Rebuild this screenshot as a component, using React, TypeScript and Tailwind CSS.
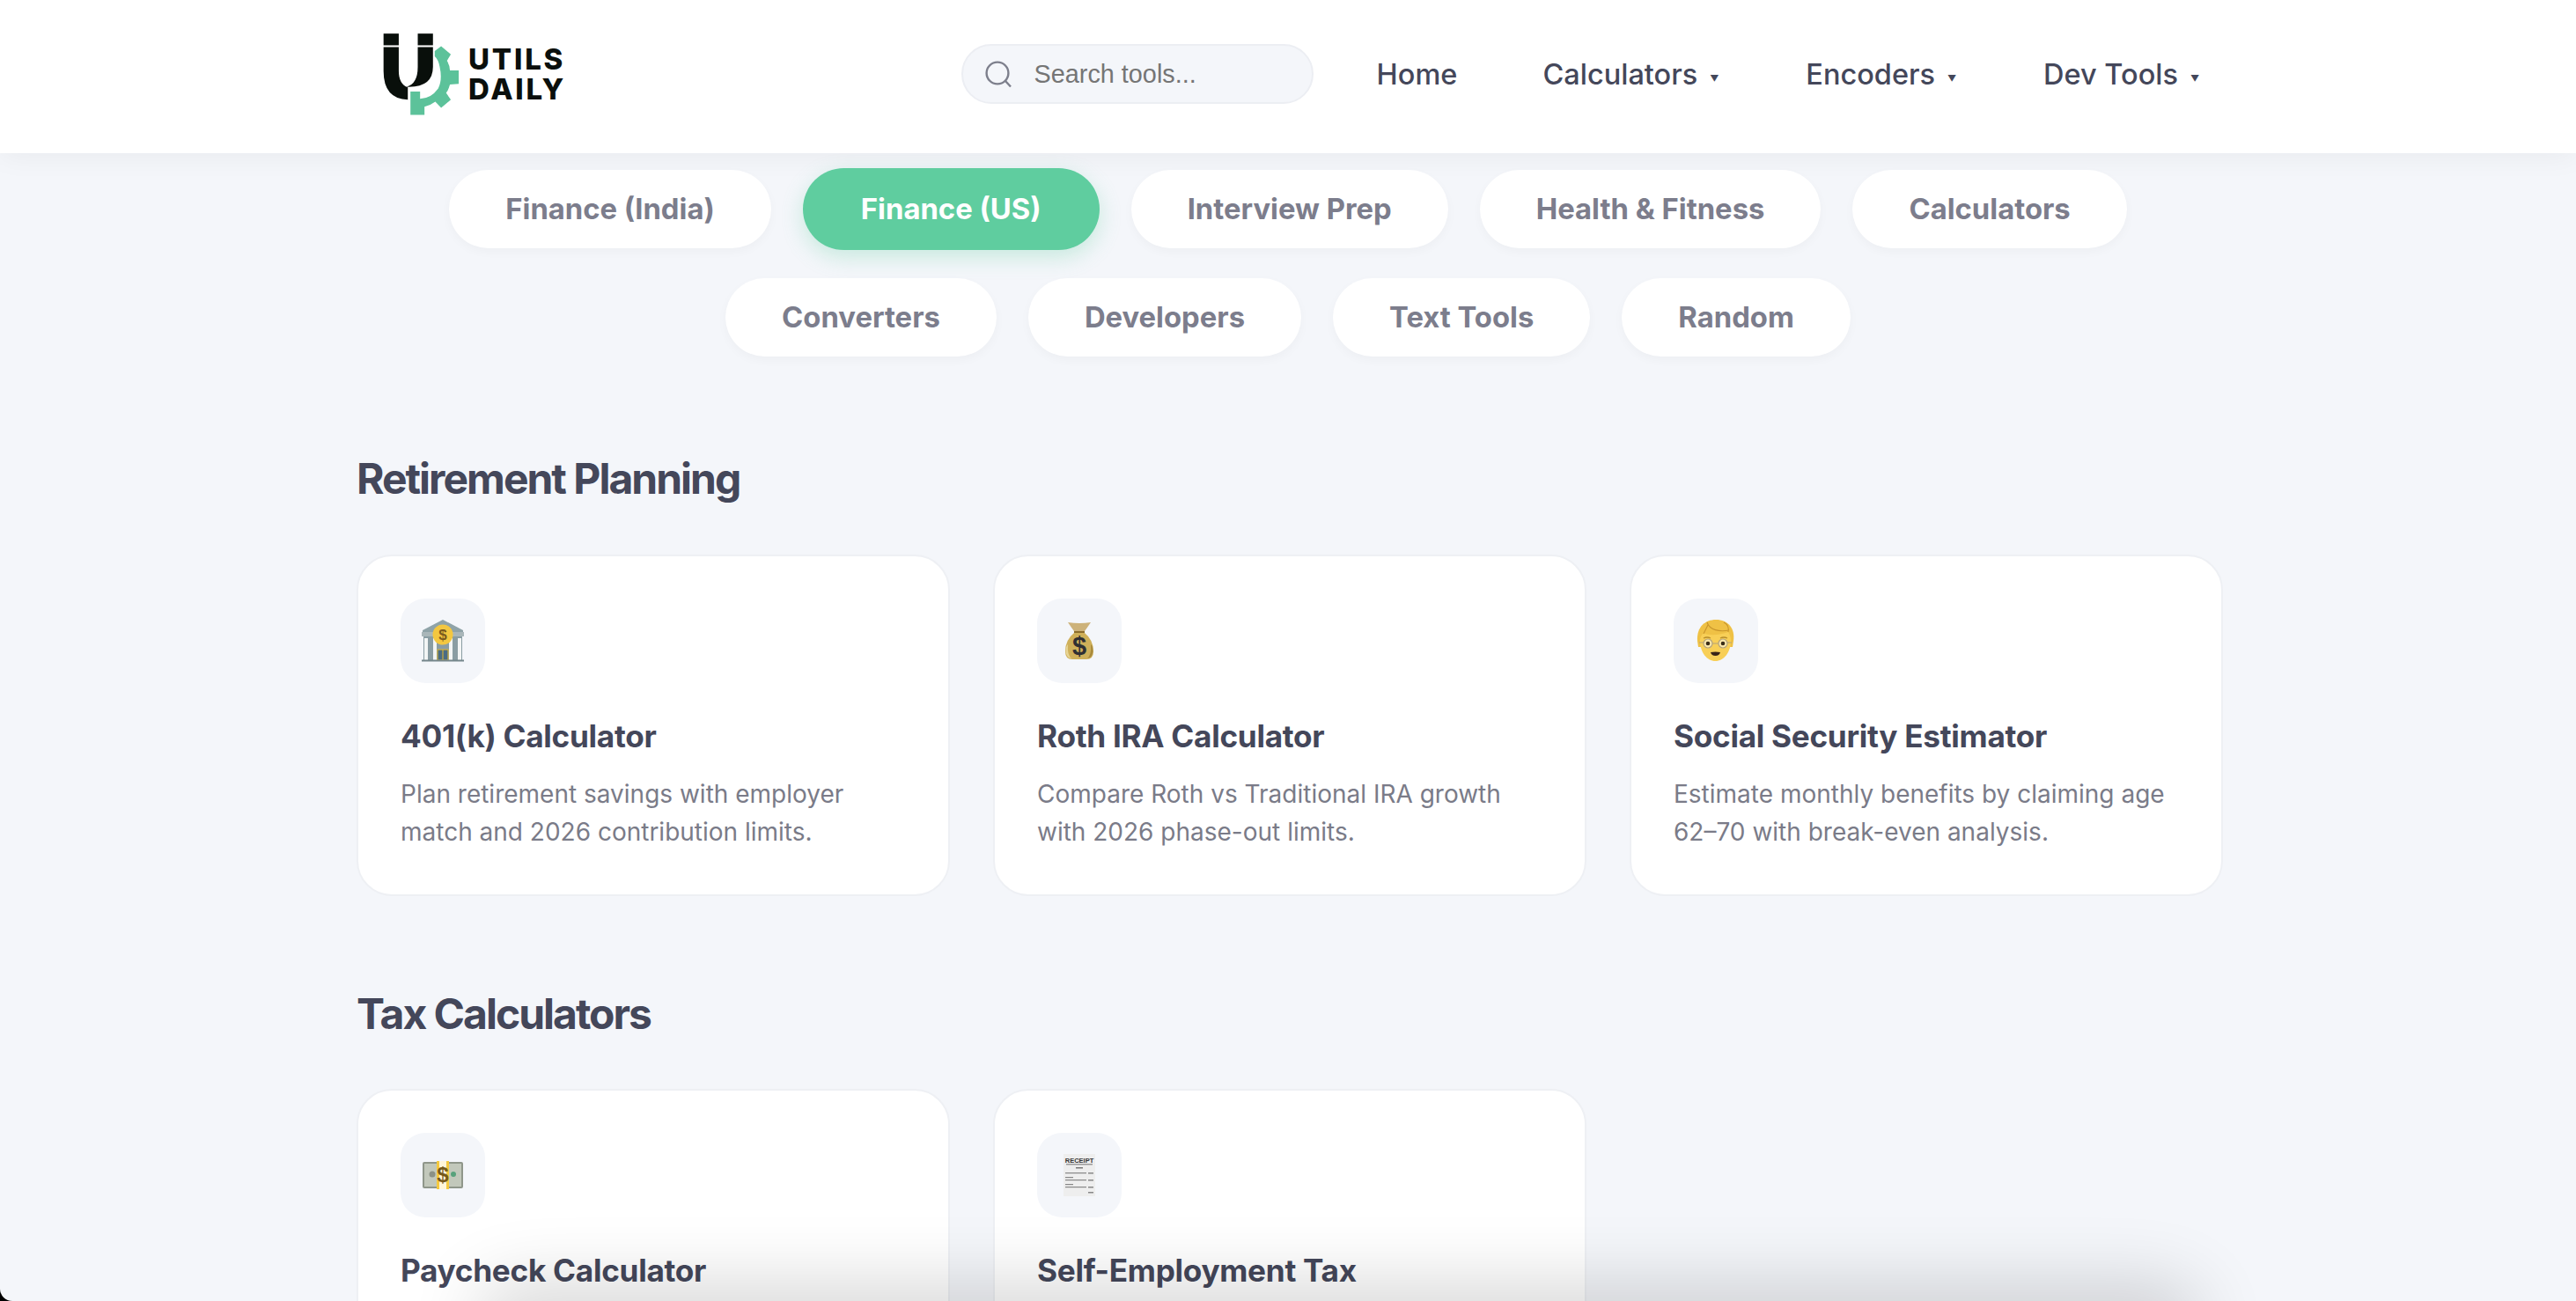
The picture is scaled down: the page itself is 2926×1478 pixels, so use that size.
import React from "react";

const Logo = () => (
  <svg width="93" height="100" viewBox="100 100 280 300" className="shrink-0">
    <g fill="#090f0b">
      <rect x="108" y="112" width="52" height="40" />
      <rect x="225" y="112" width="52" height="40" />
      <path d="M108 158H160V240Q160 284 191 296V338Q108 335 108 240Z" />
      <path d="M225 158H277V226Q277 298 186 294Q225 285 225 226Z" />
    </g>
    <path
      fill="#5cc29a"
      d="M305 155L338 183L325 205Q335 222 335 238H365V284L335 286Q330 305 322 315L338 338L305 366L285 345Q268 358 248 362V390H200V310H233V335Q270 335 295 300Q310 270 300 225Q295 200 283 190V172Z"
    />
  </svg>
);

const SearchIcon = () => (
  <svg width="31" height="31" viewBox="0 0 31 31" fill="none" stroke="#7d7f8c" strokeWidth="2.4" className="shrink-0">
    <circle cx="14" cy="14" r="12.4" />
    <path d="M23 23L29 29.5" />
  </svg>
);

const Bank = () => (
  <svg width="48" height="48" viewBox="0 0 48 48">
    <path d="M1 12L24 0L47 12V14H1Z" fill="#8fa3a8" />
    <rect x="0" y="14" width="48" height="5" fill="#a9b6b9" />
    <rect x="2" y="19" width="44" height="27" fill="#8a9da3" />
    <g fill="#f3f5f5">
      <rect x="3" y="21" width="4" height="25" />
      <rect x="13" y="21" width="4" height="25" />
      <rect x="31" y="21" width="4" height="25" />
      <rect x="41" y="21" width="4" height="25" />
    </g>
    <rect x="18" y="34" width="12" height="12" fill="#4a6c84" stroke="#e4b92f" strokeWidth="1" />
    <path d="M24 34V46" stroke="#e4b92f" />
    <rect x="0" y="45.500" width="48" height="2" fill="#75868b" />
    <circle cx="24" cy="17" r="11.500" fill="#f3c740" />
    <text x="24" y="23" textAnchor="middle" fontSize="17" fontWeight="700" fill="#7a5a1d" fontFamily="Liberation Sans, sans-serif">$</text>
  </svg>
);

const MoneyBag = () => (
  <svg width="34" height="44" viewBox="0 0 34 44">
    <path d="M4 1Q17 3 30 1Q26 7 23 11H11Q8 7 4 1Z" fill="#cdb27a" />
    <path d="M11 11H23V14H11Z" fill="#8b6d2e" />
    <path d="M11 13H23Q33 21 33 34Q33 43 25 43H9Q1 43 1 34Q1 21 11 13Z" fill="#cfb05a" />
    <path d="M4 26Q3 38 8 42Q2 41 1.500 34Q1.500 28 4 26Z" fill="#e8d595" />
    <path d="M30 26Q31 38 26 42Q32 41 32.500 34Q32.500 28 30 26Z" fill="#a98a3c" />
    <text x="17" y="38" textAnchor="middle" fontSize="29" fontWeight="700" fill="#2f2f33" fontFamily="Liberation Sans, sans-serif">$</text>
  </svg>
);

const Older = () => (
  <svg width="44" height="48" viewBox="0 0 44 48">
    <path d="M1 24C0 8 10 0 22 0C36 0 44 10 42 24L41 31H2Z" fill="#efc145" />
    <path d="M4 24C4 37 12 47 21.500 47C31 47 39 37 39 24C39 20 38 17 36 14C28 17 15 19 8 15C5 18 4 21 4 24Z" fill="#f8cf57" />
    <path d="M12 3C15 12 26 14 37 12M13 6L8 16M36 14C37 9 35 5 31 3" stroke="#c8952c" strokeWidth="1.100" fill="none" />
    <path d="M8 21Q12 19 16 21M27 21Q31 19 35 21" stroke="#b88e2c" strokeWidth="1.300" fill="none" />
    <circle cx="13" cy="27" r="5" fill="#fce9ad" stroke="#b3a37c" strokeWidth="1.200" />
    <circle cx="30" cy="27" r="5" fill="#fce9ad" stroke="#b3a37c" strokeWidth="1.200" />
    <path d="M18 27H25M3 26H8M35 26H40" stroke="#b3a37c" strokeWidth="1.200" />
    <circle cx="13" cy="27" r="2.300" fill="#3a2c18" />
    <circle cx="30" cy="27" r="2.300" fill="#3a2c18" />
    <path d="M16 37Q21.500 36 27 37Q26 41 21.500 41Q17 41 16 37Z" fill="#3a2417" />
  </svg>
);

const Banknote = () => (
  <svg width="46" height="32" viewBox="0 0 46 32">
    <rect x="0" y="1" width="46" height="30" rx="2" fill="#8f968a" />
    <rect x="2" y="3" width="42" height="26" fill="#c2c8bb" />
    <circle cx="11" cy="15" r="3.500" fill="#8b9186" />
    <circle cx="35" cy="15" r="3" fill="#58a27c" />
    <rect x="16" y="0" width="14" height="32" fill="#fff6d8" />
    <rect x="16" y="0" width="3" height="32" fill="#f4c93f" />
    <rect x="27" y="0" width="3" height="32" fill="#f4c93f" />
    <text x="23" y="24" textAnchor="middle" fontSize="24" fontWeight="700" fill="#75591a" fontFamily="Liberation Sans, sans-serif">$</text>
  </svg>
);

const Receipt = () => (
  <svg width="36" height="48" viewBox="0 0 36 48">
    <rect x="0" y="0" width="36" height="48" fill="#eeeeee" />
    <text x="18" y="10" textAnchor="middle" fontSize="7.500" fontWeight="700" fill="#333" fontFamily="Liberation Sans, sans-serif">RECEIPT</text>
    <rect x="3" y="11" width="30" height="1.500" fill="#9a9a9a" />
    <rect x="14" y="15" width="8" height="1.500" fill="#777" />
    <g fill="#888">
      <rect x="2" y="21" width="24" height="1.200" />
      <rect x="28" y="21" width="6" height="1.500" />
      <rect x="2" y="26" width="9" height="1.200" />
      <rect x="2" y="29" width="24" height="1.200" />
      <rect x="28" y="29" width="6" height="1.500" />
      <rect x="2" y="34" width="9" height="1.200" />
      <rect x="2" y="37" width="24" height="1.200" />
      <rect x="28" y="37" width="6" height="1.500" />
      <rect x="28" y="43" width="6" height="1.500" />
    </g>
  </svg>
);

const pills = ["Finance (India)", "Finance (US)", "Interview Prep", "Health & Fitness", "Calculators", "Converters", "Developers", "Text Tools", "Random"];

const Card = ({ icon, title, desc }: { icon: React.ReactNode; title: string; desc: string }) => (
  <div className="h-[388px] rounded-[40px] border-2 border-[#eef0f4] bg-white px-[48px] pt-[48px]">
    <div className="flex h-[96px] w-[96px] items-center justify-center rounded-[28px] bg-[#f4f6fa]">{icon}</div>
    <h3 className="mt-[36px] text-[35.2px] leading-[48px] font-bold tracking-[-0.3px] text-[#44475a]">{title}</h3>
    <p className="mt-[21px] text-[28px] leading-[43px] text-[#7a7b88]">{desc}</p>
  </div>
);

const Nav = ({ label, caret }: { label: string; caret?: boolean }) => (
  <a className="flex items-center text-[32.5px] font-medium text-[#44475a]">
    {label}
    {caret && <span className="ml-[14px] mt-[8px] w-[12px] text-[10px] leading-none">▼</span>}
  </a>
);

export default function App() {
  return (
    <div className="relative h-[1478px] w-full overflow-hidden bg-black font-['Inter',sans-serif]">
      <div className="h-full overflow-hidden rounded-bl-[14px] bg-[#f4f6fa]">
        <header className="flex h-[174px] items-center bg-white pb-[6px] pl-[433px] pr-[426px] shadow-[0_4px_30px_rgba(0,0,0,0.05)]">
          <Logo />
          <div className="ml-[6px] text-[33px] leading-[34px] font-extrabold tracking-[2.8px] text-[#0a0f0c]">
            UTILS
            <br />
            DAILY
          </div>
          <div className="ml-auto flex h-[68px] w-[400px] items-center rounded-full border-2 border-[#eceef3] bg-[#f4f6fa] pl-[25px] font-['Liberation_Sans',sans-serif] text-[28.8px] text-[#757575]">
            <SearchIcon />
            <span className="ml-[25px] mt-[2px]">Search tools...</span>
          </div>
          <nav className="ml-[72px] mt-[2px] flex items-center gap-[97px]">
            <Nav label="Home" />
            <Nav label="Calculators" caret />
            <Nav label="Encoders" caret />
            <Nav label="Dev Tools" caret />
          </nav>
        </header>
        <div className="mx-auto mt-[19px] flex w-[2120px] flex-wrap items-center justify-center gap-x-[36px] gap-y-[34px]">
          {pills.map((p) =>
            p === "Finance (US)" ? (
              <div key={p} className="-my-[2px] flex h-[93px] items-center rounded-full bg-[#5fcd9f] px-[66px] text-[32.8px] font-bold text-white shadow-[0_8px_24px_rgba(95,205,159,0.3)]">
                {p}
              </div>
            ) : (
              <div key={p} className="flex h-[89px] items-center rounded-full bg-white px-[64px] text-[32.8px] font-bold text-[#7c7d8c] shadow-[0_4px_12px_rgba(0,0,0,0.03)]">
                {p}
              </div>
            )
          )}
        </div>
        <main className="ml-[405px] w-[2120px]">
          <h2 className="mt-[110px] text-[48px] leading-[58px] font-bold tracking-[-2px] text-[#44475a]">Retirement Planning</h2>
          <div className="mt-[57px] grid grid-cols-3 gap-[49px]">
            <Card icon={<Bank />} title="401(k) Calculator" desc="Plan retirement savings with employer match and 2026 contribution limits." />
            <Card icon={<MoneyBag />} title="Roth IRA Calculator" desc="Compare Roth vs Traditional IRA growth with 2026 phase-out limits." />
            <Card icon={<Older />} title="Social Security Estimator" desc="Estimate monthly benefits by claiming age 62–70 with break-even analysis." />
          </div>
          <h2 className="mt-[105px] text-[48px] leading-[58px] font-bold tracking-[-2px] text-[#44475a]">Tax Calculators</h2>
          <div className="mt-[56px] grid grid-cols-3 gap-[49px]">
            <Card icon={<Banknote />} title="Paycheck Calculator" desc="" />
            <Card icon={<Receipt />} title="Self-Employment Tax" desc="" />
          </div>
        </main>
      </div>
      <div className="absolute bottom-[-50px] left-[560px] h-[50px] w-[1920px] rounded-[40px] shadow-[0_0_80px_20px_rgba(0,0,0,0.16)]" />
    </div>
  );
}
